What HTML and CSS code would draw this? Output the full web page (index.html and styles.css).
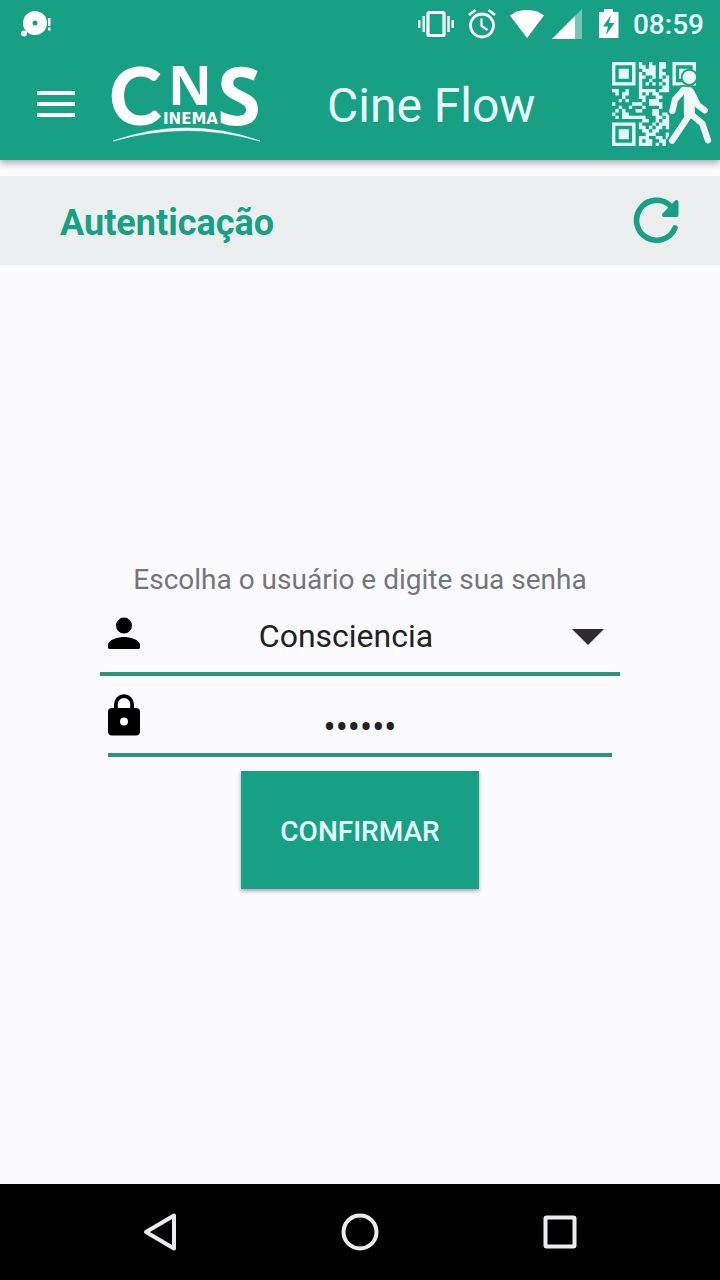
FILE: index.html
```html
<!DOCTYPE html>
<html lang="pt-BR">
<head>
<meta charset="utf-8">
<meta name="viewport" content="width=device-width, initial-scale=1">
<title>Cine Flow</title>
<link rel="stylesheet" href="styles.css">
</head>
<body>
<div class="screen">
  <header class="top">
    <div class="status">
      <svg class="status-note" width="32" height="32" viewBox="0 0 32 32" aria-hidden="true">
        <circle cx="15" cy="15" r="12" fill="#fff"/><circle cx="15" cy="15" r="2.5" fill="#18a085"/>
        <circle cx="4" cy="25.500" r="3" fill="#fff"/>
        <path d="M28 10h2.500v8h-2.500zM28 19.500h2.500v3h-2.500z" fill="#fff"/>
      </svg>
      <div class="status-icons">
        <svg width="42" height="32" viewBox="0 0 42 32" aria-hidden="true">
          <rect x="10" y="4.500" width="16" height="23" rx="1" fill="none" stroke="#fff" stroke-width="3.200"/>
          <path d="M5.700 8v16M1.300 12v8M30.500 8v16M34.700 12v8" stroke="#fff" stroke-width="2.400"/>
        </svg>
        <svg width="34" height="32" viewBox="0 0 34 32" aria-hidden="true">
          <circle cx="14" cy="17.500" r="11.500" fill="none" stroke="#fff" stroke-width="2.800"/>
          <path d="M1 7l6.500-5M27 7l-6.500-5" stroke="#fff" stroke-width="2.800"/>
          <path d="M13.500 10.500v7.500l6 4" fill="none" stroke="#fff" stroke-width="2.200"/>
        </svg>
        <svg width="34" height="32" viewBox="0 0 34 32" aria-hidden="true"><path d="M0 7.500C10 .3 24 .3 34 7.500L17 30z" fill="#fff"/></svg>
        <svg width="39" height="32" viewBox="0 0 39 32" aria-hidden="true"><path d="M30 1v30H0z" fill="#fff" opacity=".4"/><path d="M23 8v23H0z" fill="#fff"/></svg>
        <svg width="26" height="32" viewBox="0 0 26 32" aria-hidden="true">
          <path d="M5 1h9v3h5.500v26H0V4h5z" fill="#fff"/><path d="M12 7L4 18.500h5L7 27l8.500-12h-5.500z" fill="#18a085"/>
        </svg>
        <time class="clock">08:59</time>
      </div>
    </div>
    <div class="appbar">
      <button class="icon-button menu" type="button" aria-label="Menu">
        <svg width="38" height="28" viewBox="0 0 38 28" aria-hidden="true"><path d="M0 3h38M0 14h38M0 25h38" stroke="#fff" stroke-width="4"/></svg>
      </button>
      <svg class="logo" width="150" height="80" viewBox="0 0 150 80" role="img" aria-label="CNS Cinema">
        <text class="logo-c" x="-2" y="61">C</text>
        <text class="logo-n" x="57" y="41">N</text>
        <text class="logo-s" x="106" y="61">S</text>
        <text class="logo-small" x="52" y="60">INEMA</text>
        <path d="M2 77Q76 51 149 77Q76 56 2 77z" fill="#fff" stroke="#fff" stroke-width=".6"/>
      </svg>
      <h1 class="app-title">Cine Flow</h1>
      <svg class="qr" width="100" height="85" viewBox="0 0 300 255" aria-hidden="true">
        <g transform="scale(10.080)" fill="none" stroke="#e4fffa">
          <path d="M.5 .5h6v6h-6zM.5 18.500h6v6h-6zM18.500 .5h6v6h-6z"/>
          <path d="M2 3.500h3M2 21.500h3M20 3.500h3" stroke-width="3"/>
          <path d="M8 .5h1m2 0h1m2 0h2M8 1.500h2m1 0h2m1 0h2M9 2.500h4m1 0h1M8 3.500h1m1 0h3m1 0h2M8 4.500h2m2 0h1m1 0h1m1 0h1M8 5.500h1m2 0h1m3 0h2M8 6.500h1m1 0h1m1 0h1m1 0h1m1 0h1M8 7.500h1m6 0h2
          M0 8.500h2m2 0h1m3 0h5m1 0h3M1 9.500h1m1 0h2m3 0h1m1 0h1m1 0h2M3 10.500h1m4 0h2m3 0h2M2 11.500h1m1 0h1m4 0h1m1 0h3M0 12.500h1m5 0h3m2 0h4M2 13.500h1m2 0h1m3 0h1m4 0h1M1 14.500h1m1 0h1m3 0h2m3 0h2M0 15.500h1m2 0h2m7 0h2m1 0h2
          M1 16.500h1m1 0h7m3 0h2m1 0h1M9 17.500h2m2 0h1m1 0h2M8 18.500h1m3 0h1m1 0h3M8 19.500h2m1 0h1m1 0h2m1 0h1M9 20.500h2m1 0h2M10 21.500h3m3 0h1M8 22.500h3m2 0h2m1 0h1M8 23.500h1m1 0h2m2 0h2M8 24.500h4m1 0h1m1 0h1"/>
        </g>
        <g stroke-linecap="round" stroke-linejoin="round">
          <g fill="#18a085" stroke="#18a085" stroke-width="32">
            <circle cx="232" cy="46" r="10"/><path d="M211 86l27 2v66l-15 3z"/>
            <path d="M211 86l-24 28-6 34M242 105l18 26 18 15M230 162l-50 74M235 155l36 30 17 50" fill="none"/>
          </g>
          <circle cx="232" cy="46" r="20" fill="#f0f8f8"/>
          <g fill="#f0f8f8" stroke="#f0f8f8" stroke-width="19">
            <path d="M214 84l20 1 5 14v52l-14 6V92z"/>
            <path d="M214 85l-25 28-8 34M239 92l19 38 20 15M230 162l-50 74M235 155l36 30 17 50" fill="none"/>
          </g>
        </g>
      </svg>
    </div>
  </header>

  <section class="section-bar">
    <h2 class="section-title">Autenticação</h2>
    <button class="icon-button" type="button" aria-label="Atualizar">
      <svg width="48" height="48" viewBox="0 0 48 48" aria-hidden="true">
        <path d="M43 31A20 20 0 1 1 38 8.500" fill="none" stroke="#18a085" stroke-width="5.600" stroke-linecap="round"/>
        <path d="M44.500 5v13H32z" fill="#18a085" stroke="#18a085" stroke-width="4" stroke-linejoin="round"/>
      </svg>
    </button>
  </section>

  <main class="content">
    <form class="login">
      <p class="hint">Escolha o usuário e digite sua senha</p>
      <div class="field field-user">
        <label class="field-icon" for="user" aria-label="Usuário">
          <svg width="32" height="48" viewBox="4 1 16 24" aria-hidden="true"><path d="M12 11.800a4 4 0 1 0 0-8 4 4 0 0 0 0 8zm0 1.700c-2.700 0-8 1.300-8 4v1.300q0 .7.7.7h14.600q.7 0 .7-.7V17.500c0-2.700-5.300-4-8-4z"/></svg>
        </label>
        <select class="user" id="user"><option>Consciencia</option></select>
        <span class="arrow"></span>
      </div>
      <div class="field field-pass">
        <label class="field-icon" for="pass" aria-label="Senha">
          <svg width="32" height="48" viewBox="4 0 16 24" aria-hidden="true"><path fill-rule="evenodd" d="M18 8.500h-1V6.600a5 5 0 0 0-10 0v1.900H6a2 2 0 0 0-2 2v9.800a2 2 0 0 0 2 2h12a2 2 0 0 0 2-2v-9.800a2 2 0 0 0-2-2zM12 17.300a2 2 0 1 1 0-4 2 2 0 0 1 0 4zM15.100 8.500H8.900V6.600a3.100 3.100 0 0 1 6.200 0z"/></svg>
        </label>
        <input class="pass" id="pass" type="password" value="123456">
      </div>
      <button class="confirm" type="button">CONFIRMAR</button>
    </form>
  </main>

  <nav class="navbar">
    <button class="icon-button" type="button" aria-label="Voltar"><svg width="40" height="40" viewBox="0 0 40 40" aria-hidden="true"><path d="M34 3.500v33L6 20z"/></svg></button>
    <button class="icon-button" type="button" aria-label="Início"><svg width="40" height="40" viewBox="0 0 40 40" aria-hidden="true"><circle cx="20" cy="20" r="16.500"/></svg></button>
    <button class="icon-button" type="button" aria-label="Recentes"><svg width="40" height="40" viewBox="0 0 40 40" aria-hidden="true"><rect x="5.500" y="5.500" width="29" height="29" rx="1"/></svg></button>
  </nav>
</div>
</body>
</html>
```
FILE: styles.css
```css
* { box-sizing: border-box; }
body { margin: 0; font-family: Roboto, "Noto Sans", sans-serif; background: #fbfafd; color: #222; }
svg { display: block; flex: none; }
h1, h2, p { margin: 0; }

.screen { min-height: 100vh; display: flex; flex-direction: column; }

.icon-button { display: block; padding: 0; border: 0; background: none; }

.top { background: #18a085; color: #fff; box-shadow: 0 2px 8px rgba(0, 0, 0, 0.4); }
.status { height: 48px; padding: 0 16px 0 20px; display: flex; align-items: center; justify-content: space-between; }
.status-icons { display: flex; align-items: center; gap: 8px; }
.clock { padding-top: 2px; font-size: 28px; line-height: 32px; font-weight: 500; color: #e8fffb; }

.appbar { height: 112px; padding: 0 8px 0 37px; display: flex; align-items: center; }
.menu { margin-right: 36px; }
.logo { overflow: visible; fill: #fff; font-family: "Open Sans", sans-serif; font-weight: 700; }
.logo-c { font-family: Lato, sans-serif; font-size: 80px; font-weight: 900; }
.logo-n { font-size: 54px; }
.logo-s { font-size: 80px; }
.logo-small { font-family: "DejaVu Sans", sans-serif; font-size: 15px; }
.app-title { flex: 1; padding: 3px 0 0 66px; font-size: 48px; line-height: 56px; font-weight: 400; color: #e8fffb; }

.section-bar { margin-top: 16px; height: 89px; padding: 0 40px 0 60px; display: flex; align-items: center; justify-content: space-between; background: #eceff0; }
.section-title { padding-top: 4px; font-size: 36px; line-height: 44px; font-weight: 700; color: #18a085; }

.content { flex: 1; padding: 0 100px; display: flex; align-items: center; }
.login { flex: 1; min-width: 0; display: flex; flex-direction: column; }
.hint { font-size: 28px; line-height: 40px; text-align: center; color: #76757a; }

.field { display: flex; align-items: center; border-bottom: 4px solid #2a9578; }
.field-user { position: relative; height: 76px; padding-left: 8px; }
.field-pass { height: 81px; margin: 0 8px; }
.field-icon { flex: none; }
.user { flex: 1; min-width: 0; height: 72px; padding: 0 68px 0 0; border: 0; background: none; appearance: none; font: 400 32px/40px Roboto, sans-serif; color: #222; text-align: center; text-align-last: center; }
.arrow { position: absolute; right: 16px; top: 29px; width: 32px; height: 16px; background: #2d2b2f; clip-path: polygon(0 0, 100% 0, 50% 100%); pointer-events: none; }
.pass { flex: 1; min-width: 0; height: 77px; padding: 26px 32px 0 0; border: 0; outline: 0; background: none; font: 400 36px/40px Roboto, sans-serif; color: #222; text-align: center; }

.confirm { align-self: center; margin-top: 14px; padding: 43px 39px 39px; border: 0; background: #18a085; box-shadow: 0 2px 4px rgba(0, 0, 0, 0.35); font: 500 28px/36px Roboto, sans-serif; color: #e8fffb; }

.navbar { height: 96px; padding: 0 140px; display: flex; align-items: center; justify-content: space-between; background: #000; }
.navbar svg { fill: none; stroke: #ececee; stroke-width: 4; stroke-linejoin: round; }
```
